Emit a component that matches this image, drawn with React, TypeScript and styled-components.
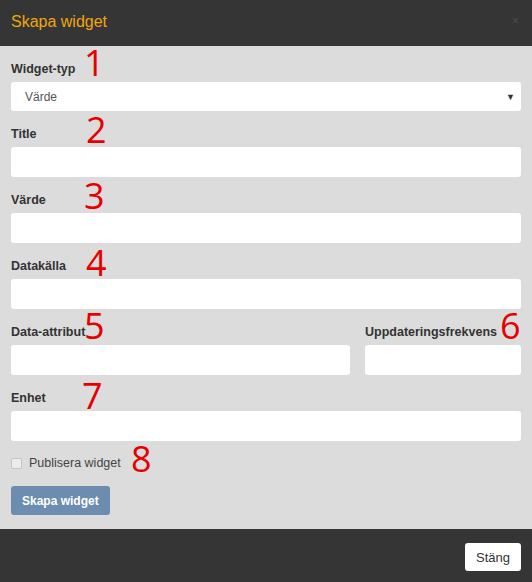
import React from "react";
import styled, { createGlobalStyle } from "styled-components";

const GlobalStyle = createGlobalStyle`
  html, body {
    margin: 0;
    padding: 0;
    background: #dcdcdc;
  }
  body {
    font-family: "Liberation Sans", Arial, sans-serif;
  }
`;

const Modal = styled.div`
  width: 532px;
  height: 582px;
  display: flex;
  flex-direction: column;
  background: #dcdcdc;
`;

const Header = styled.div`
  height: 46px;
  flex-shrink: 0;
  background: #353535;
  display: flex;
  align-items: center;
  justify-content: space-between;
  padding: 0 11px;
  box-sizing: border-box;
`;

const Title = styled.h4`
  margin: 0;
  font-size: 16px;
  font-weight: 400;
  color: #f2a60c;
  line-height: 20px;
  margin-top: -2px;
`;

const Close = styled.span`
  font-size: 13px;
  line-height: 1;
  color: #4c4c4c;
  margin-top: -6px;
  margin-right: 2px;
`;

const Body = styled.div`
  flex: 1;
  padding: 15px 11px 0;
  box-sizing: border-box;
`;

const Group = styled.div`
  margin-bottom: 15px;
`;

const Row = styled.div`
  display: grid;
  grid-template-columns: 339px 1fr;
  column-gap: 15px;
`;

const Label = styled.label`
  position: relative;
  display: block;
  height: 16px;
  line-height: 16px;
  font-size: 12.5px;
  font-weight: 700;
  color: #333;
  margin-bottom: 5px;
`;

const Marker = styled.span<{ $left: number; $top: number }>`
  position: absolute;
  left: ${(p) => p.$left}px;
  top: ${(p) => p.$top}px;
  font-family: "Open Sans", sans-serif;
  font-size: 36px;
  line-height: 36px;
  font-weight: 400;
  color: #e60000;
  pointer-events: none;
`;

const Field = styled.div<{ $height?: number }>`
  height: ${(p) => p.$height ?? 30}px;
  background: #fff;
  border-radius: 3px;
  box-sizing: border-box;
`;

const Select = styled(Field)`
  display: flex;
  align-items: center;
  justify-content: space-between;
  padding: 0 6px 0 14px;
  font-size: 12px;
  color: #555;
`;

const Caret = styled.span`
  font-size: 9px;
  color: #333;
  margin-top: 1px;
`;

const CheckRow = styled.div`
  position: relative;
  display: flex;
  align-items: center;
  gap: 7px;
  height: 13px;
  font-size: 12.5px;
  color: #444;
`;

const Box = styled.span`
  width: 9px;
  height: 9px;
  border: 1px solid #c4c4c4;
  border-radius: 2px;
  background: #ececec;
  margin-top: 1px;
`;

const PrimaryButton = styled.button`
  margin-top: 17px;
  height: 29px;
  padding: 0 11px;
  border: none;
  border-radius: 3px;
  background: #6c8db0;
  color: #fff;
  font-family: "Liberation Sans", Arial, sans-serif;
  font-size: 12px;
  font-weight: 700;
`;

const Footer = styled.div`
  height: 53px;
  flex-shrink: 0;
  background: #353535;
  display: flex;
  justify-content: flex-end;
  align-items: flex-start;
  padding: 14px 11px 0;
  box-sizing: border-box;
`;

const DefaultButton = styled.button`
  width: 56px;
  height: 28px;
  border: none;
  border-radius: 3px;
  background: #fff;
  color: #333;
  font-family: "Liberation Sans", Arial, sans-serif;
  font-size: 13px;
`;

const fields = [
  { label: "Title", n: "2", left: 75, top: -14 },
  { label: "Värde", n: "3", left: 73, top: -14 },
  { label: "Datakälla", n: "4", left: 75, top: -13 },
];

export default function App() {
  return (
    <>
      <GlobalStyle />
      <Modal>
        <Header>
          <Title>Skapa widget</Title>
          <Close>×</Close>
        </Header>
        <Body>
          <Group>
            <Label>
              Widget-typ
              <Marker $left={73} $top={-16}>1</Marker>
            </Label>
            <Select $height={29}>
              Värde
              <Caret>▼</Caret>
            </Select>
          </Group>
          {fields.map((f) => (
            <Group key={f.label}>
              <Label>
                {f.label}
                <Marker $left={f.left} $top={f.top}>{f.n}</Marker>
              </Label>
              <Field />
            </Group>
          ))}
          <Row>
            <Group>
              <Label>
                Data-attribut
                <Marker $left={73} $top={-16}>5</Marker>
              </Label>
              <Field />
            </Group>
            <Group>
              <Label>
                Uppdateringsfrekvens
                <Marker $left={135} $top={-16}>6</Marker>
              </Label>
              <Field />
            </Group>
          </Row>
          <Group>
            <Label>
              Enhet
              <Marker $left={71} $top={-12}>7</Marker>
            </Label>
            <Field />
          </Group>
          <CheckRow>
            <Box />
            Publisera widget
            <Marker $left={120} $top={-15}>8</Marker>
          </CheckRow>
          <PrimaryButton>Skapa widget</PrimaryButton>
        </Body>
        <Footer>
          <DefaultButton>Stäng</DefaultButton>
        </Footer>
      </Modal>
    </>
  );
}
